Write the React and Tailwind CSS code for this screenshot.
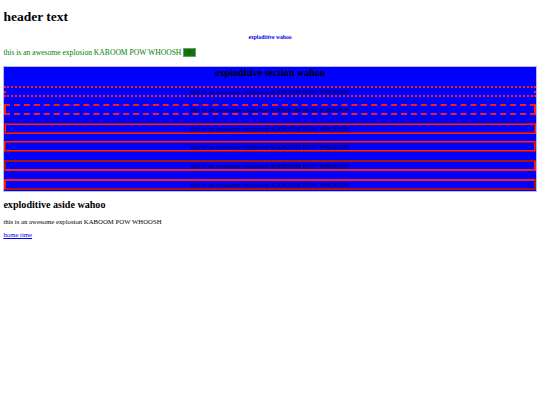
import React from "react";

const LINE = "this is an awesome explosion KABOOM POW WHOOSH";

const rows = [
  "border-2 border-dotted",
  "border-2 border-dashed",
  "border-[2.5px] [border-style:groove]",
  "border-[2.5px] [border-style:ridge]",
  "border-[2.5px] [border-style:inset]",
  "border-[2.5px] [border-style:outset]",
];

export default function App() {
  return (
    <div className="min-h-[405px] bg-white font-['Liberation_Serif',serif] text-black">
      <div className="px-[3.4px]">
        {/* header */}
        <h1 className="pt-[9px] text-[13.5px] font-bold leading-[15.5px]">header text</h1>
        <nav className="mt-[9px] text-center text-[5.6px] font-bold leading-[6.5px]">
          <a href="#" className="text-[#0000ee]">exploditive wahoo</a>
        </nav>

        <p className="mt-[8px] flex items-center text-[7.6px] leading-[9px] text-[#008000]">
          {LINE}
          <button className="ml-[2px] h-[9px] w-[13px] border border-[#888] bg-[#008000] text-[3.5px] leading-none text-[#800000]">
            ok
          </button>
        </p>

        {/* section */}
        <section className="mt-[9px] border border-[#b8b8ff] bg-[#0000ff] pb-[1px]">
          <h2 className="text-center text-[10.1px] font-bold leading-[11.6px] text-black">
            exploditive section wahoo
          </h2>
          <div className="mt-[7px] flex flex-col gap-[7.6px]">
            {rows.map((r, i) => (
              <p
                key={i}
                className={`${r} border-[#ff1a1a] text-center text-[6.75px] leading-[7px] text-[#000033]`}
              >
                {LINE}
              </p>
            ))}
          </div>
        </section>

        {/* aside */}
        <aside>
          <h2 className="mt-[7px] text-[10.1px] font-bold leading-[11.6px]">exploditive aside wahoo</h2>
          <p className="mt-[7.5px] text-[6.75px] leading-[7.8px]">{LINE}</p>
          <p className="mt-[6px] text-[6.75px] leading-[7.8px]">
            <a href="#" className="text-[#0000ee] underline">home time</a>
          </p>
        </aside>
      </div>
    </div>
  );
}
